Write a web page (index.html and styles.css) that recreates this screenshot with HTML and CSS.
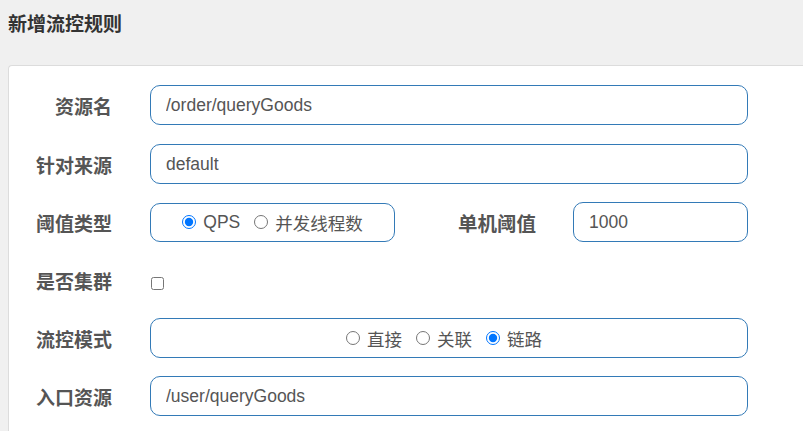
FILE: index.html
```html
<!DOCTYPE html>
<html lang="zh-CN">
<head>
    <meta charset="UTF-8">
    <title>新增流控规则</title>
    <link rel="stylesheet" href="styles.css">
</head>
<body>
<div class="page">
    <h1 class="title">新增流控规则</h1>

    <div class="panel">
        <div class="row">
            <label class="label">资源名</label>
            <input class="field" type="text" value="/order/queryGoods">
        </div>

        <div class="row">
            <label class="label">针对来源</label>
            <input class="field" type="text" value="default">
        </div>

        <div class="row">
            <label class="label">阈值类型</label>
            <div class="radio-box small">
                <label class="opt"><input type="radio" name="grade" checked>QPS</label>
                <label class="opt"><input type="radio" name="grade">并发线程数</label>
            </div>
            <label class="label inline">单机阈值</label>
            <input class="field count" type="text" value="1000">
        </div>

        <div class="row">
            <label class="label">是否集群</label>
            <input class="check" type="checkbox">
        </div>

        <div class="row">
            <label class="label">流控模式</label>
            <div class="radio-box wide">
                <label class="opt"><input type="radio" name="strategy">直接</label>
                <label class="opt"><input type="radio" name="strategy">关联</label>
                <label class="opt"><input type="radio" name="strategy" checked>链路</label>
            </div>
        </div>

        <div class="row">
            <label class="label">入口资源</label>
            <input class="field" type="text" value="/user/queryGoods">
        </div>
    </div>
</div>
</body>
</html>
```

FILE: styles.css
```css
* {
    margin: 0;
    padding: 0;
    box-sizing: border-box;
}

html, body {
    overflow: hidden;
}

body {
    font-family: "Liberation Sans", Arial, "Noto Sans CJK SC", sans-serif;
    background: #f0f0f0;
    color: #333;
    height: 431px;
}

.page {
    padding-left: 8px;
    height: 431px;
}

.title {
    font-size: 19px;
    font-weight: bold;
    color: #333;
    height: 50px;
    line-height: 50px;
    margin-bottom: 15px;
}

/* panel keeps going past the right and bottom edge of the shot */
.panel {
    height: 366px;
    background: #fff;
    border: 1px solid #dcdcdc;
    border-right: 0;
    border-bottom: 0;
    border-radius: 4px 0 0 0;
    padding-top: 19px;
}

.row {
    display: flex;
    align-items: center;
    height: 40px;
    margin-bottom: 18px;
}

.row:first-child {
    margin-bottom: 19px;
}

.label {
    width: 103px;
    text-align: right;
    margin-right: 38px;
    font-size: 19px;
    font-weight: bold;
    color: #555;
}

.label.inline {
    width: 79px;
    margin-left: 62px;
    margin-right: 37px;
    font-size: 19.5px;
}

.field {
    width: 598px;
    height: 40px;
    border: 1px solid #337ab7;
    border-radius: 10px;
    padding: 0 15px;
    font-family: inherit;
    font-size: 17.5px;
    color: #555;
    outline: none;
}

.field.count {
    width: 175px;
}

.radio-box {
    display: flex;
    justify-content: center;
    align-items: center;
    height: 39px;
    border: 1px solid #337ab7;
    border-radius: 10px;
    font-size: 17.5px;
    color: #555;
}

.radio-box.small {
    width: 245px;
}

.radio-box.wide {
    width: 598px;
    height: 40px;
    padding-right: 10px;
}

.opt {
    display: flex;
    align-items: center;
    margin: 0 7px;
}

.opt input {
    width: 14px;
    height: 14px;
    margin: 0 7px 0 0;
}

.check {
    width: 13px;
    height: 13px;
    margin: 6px 0 0 1px;
}
```
